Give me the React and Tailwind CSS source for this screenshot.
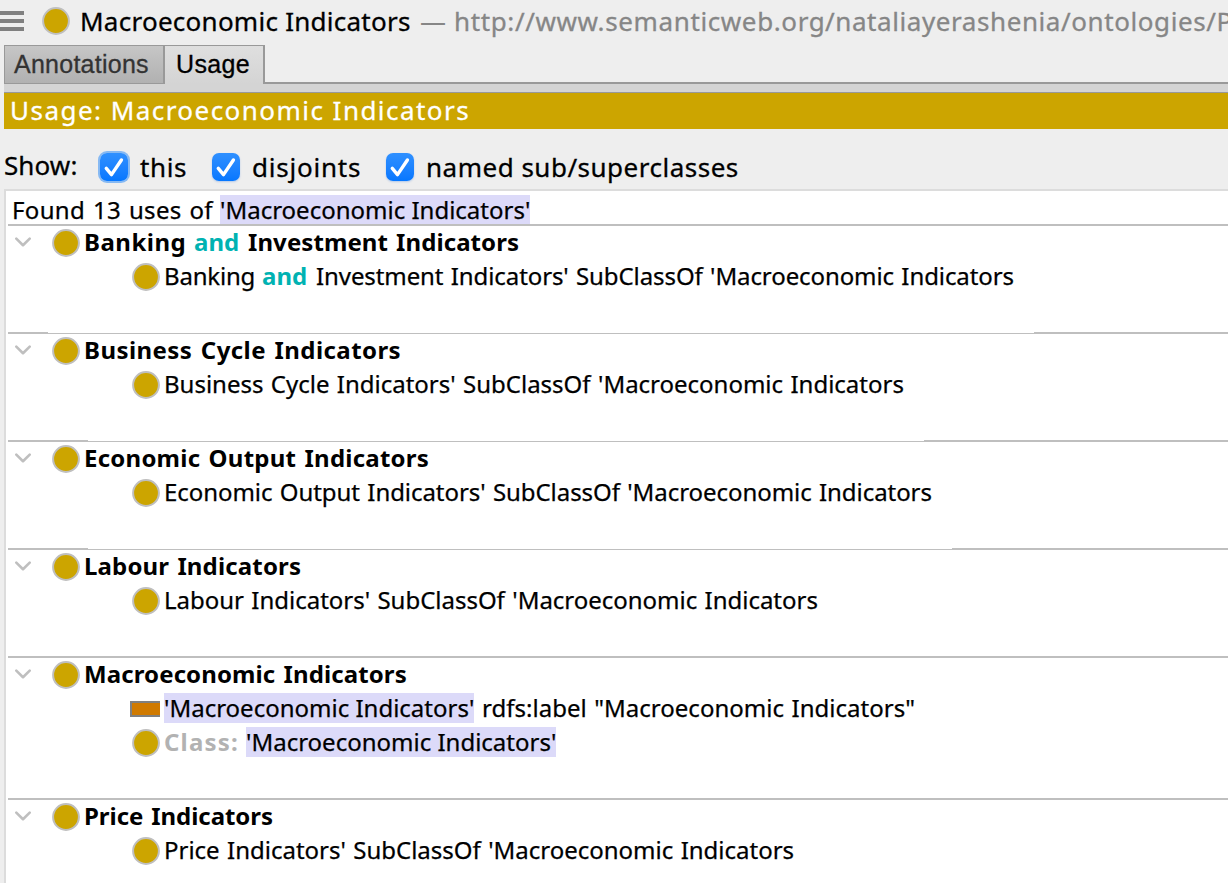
import React from "react";

function Dot() {
  return (
    <svg className="block h-7 w-7 shrink-0" viewBox="0 0 28 28">
      <circle cx="14" cy="14" r="12.9" fill="#cca500" stroke="#bfbfbf" strokeWidth="2" />
    </svg>
  );
}

function Chevron() {
  return (
    <svg className="ml-[7px] h-[34px] w-4 shrink-0" viewBox="0 0 16 34">
      <path d="M1.3 12.6 L8 19.2 L14.7 12.6" fill="none" stroke="#bfbfbf" strokeWidth="2.6" strokeLinecap="round" strokeLinejoin="round" />
    </svg>
  );
}

function Check({ focus }) {
  return (
    <span
      className={
        focus
          ? "flex h-7 w-7 shrink-0 rounded-[7px] bg-gradient-to-b from-[#2f90ff] to-[#0577ff] shadow-[0_0_0_2px_#86b9f3]"
          : "flex h-7 w-7 shrink-0 rounded-[7px] bg-gradient-to-b from-[#2f90ff] to-[#0577ff] shadow-[0_1px_2px_rgba(0,90,220,0.25)]"
      }
    >
      <svg className="h-7 w-7" viewBox="0 0 28 28">
        <path d="M6.3 15.4 L11.5 21.6 L21.4 7" fill="none" stroke="#fff" strokeWidth="3.4" strokeLinecap="round" strokeLinejoin="round" />
      </svg>
    </span>
  );
}

function Line({ gap }) {
  return (
    <div className="ml-0.5 flex h-0.5 items-end bg-white">
      {gap ? (
        <>
          <div className={gap.left + " h-0.5 shrink-0 bg-[#bfbfbf]"} />
          <div className={gap.mid + " h-px shrink-0 bg-[#bfbfbf]"} />
          <div className="h-0.5 flex-1 bg-[#bfbfbf]" />
        </>
      ) : (
        <div className="h-0.5 flex-1 bg-[#bfbfbf]" />
      )}
    </div>
  );
}

function T({ className = "", children }) {
  return <span className={"mt-px block h-[30px] shrink-0 whitespace-pre leading-[30px] " + className}>{children}</span>;
}

function Group({ title, children, tall }) {
  return (
    <section className={tall ? "h-[140px] text-[24px]" : "h-[106px] text-[24px]"}>
      <div className="ml-0.5 flex h-[34px]">
        <Chevron />
        <div className="ml-[21px] mr-[4px] flex items-center">
          <Dot />
        </div>
        <div className="flex font-bold [word-spacing:1.8px]">{title}</div>
      </div>
      {children}
    </section>
  );
}

function Sub({ icon, children }) {
  return (
    <div className="flex h-[34px] pl-[126px] [-webkit-text-stroke:0.25px] [word-spacing:1.2px]">
      <div className="mr-[4px] flex w-7 items-center justify-end">{icon || <Dot />}</div>
      {children}
    </div>
  );
}

const annotationIcon = <div className="h-4 w-[30px] shrink-0 border-2 border-r-0 border-[#808080] bg-[#d07a00]" />;

export default function App() {
  return (
    <div className="flex h-[883px] w-[1228px] flex-col overflow-hidden bg-[#eeeeee] font-['Noto_Sans','Open_Sans',sans-serif] text-black">
      <header className="flex h-[45px] text-[26px] [-webkit-text-stroke:0.3px]">
        <div className="mt-[11px] flex h-5 w-6 shrink-0 flex-col justify-between">
          <div className="h-1 bg-[#808080]" />
          <div className="h-1 bg-[#808080]" />
          <div className="h-1 bg-[#808080]" />
        </div>
        <div className="ml-[18px] mt-[7px] h-7">
          <Dot />
        </div>
        <span className="ml-[10px] mt-[3px] block w-[340px] shrink-0 whitespace-pre leading-9 tracking-[0.26px]">Macroeconomic Indicators</span>
        <span className="mt-[3px] block w-[33px] shrink-0 leading-9 text-[#868686] [-webkit-text-stroke:0]">—</span>
        <span className="ml-px mt-[3px] block w-[371px] shrink-0 whitespace-pre leading-9 tracking-[0.62px] text-[#868686]">http://www.semanticweb.org</span>
        <span className="mt-[3px] block whitespace-pre leading-9 tracking-[0.58px] text-[#868686]">/nataliayerashenia/ontologies/P</span>
      </header>

      <nav className="flex h-[39px] shrink-0 pl-1 font-['Liberation_Sans',sans-serif] text-[25px] [-webkit-text-stroke:0.3px]">
        <div className="w-[159px] border border-r-0 border-[#999999] bg-gradient-to-b from-[#c6c6c6] to-[#b1b1b1] pl-[9px] leading-9 tracking-[0.25px] text-[#333333]">Annotations</div>
        <div className="w-[102px] border-l-2 border-r-2 border-t border-[#999999] bg-gradient-to-b from-[#dfdfdf] to-[#d4d4d4] pl-[11px] leading-9 tracking-[0.35px]">Usage</div>
        <div className="flex-1 border-b-2 border-[#999999]" />
      </nav>
      <div className="ml-1 h-[9px] shrink-0 border-b border-[#999999] bg-[#d4d4d4]" />
      <div className="ml-1 h-9 shrink-0 whitespace-pre bg-[#cca500] pl-1.5 text-[26px] leading-[34px] tracking-[1.46px] text-white [-webkit-text-stroke:0.3px]">Usage: Macroeconomic Indicators</div>

      <div className="flex h-[60px] shrink-0 items-start pl-1 pt-6 text-[26px] leading-7 [-webkit-text-stroke:0.3px]">
        <span className="-mt-0.5 block w-24 shrink-0 tracking-[0.1px]">Show:</span>
        <Check focus />
        <span className="ml-3 block w-[72px] shrink-0 tracking-[0.6px]">this</span>
        <Check />
        <span className="ml-3 block w-[134px] shrink-0 tracking-[0.78px]">disjoints</span>
        <Check />
        <span className="ml-3 block shrink-0 whitespace-pre tracking-[0.5px]">named sub/superclasses</span>
      </div>

      <main className="ml-1 min-h-0 flex-1 overflow-hidden border-l-2 border-t-2 border-[#dcdcdc] bg-white">
        <div className="flex h-[33px] pl-[5px] pt-[3px] text-[24px] [-webkit-text-stroke:0.25px]">
          <T className="w-[209px] pl-px tracking-[0.35px] [word-spacing:1.2px]">Found 13 uses of</T>
          <T className="w-[310px] bg-[#dcdaf9]">'Macroeconomic Indicators'</T>
        </div>
        <Line />
        <Group
          title={
            <>
              <T className="w-[110px] tracking-[0.5px]">Banking</T>
              <T className="w-[54px] text-[#00b2b2]">and</T>
              <T className="tracking-[0.08px]">Investment Indicators</T>
            </>
          }
        >
          <Sub>
            <T className="w-[98px] tracking-[-0.2px]">Banking</T>
            <T className="w-[54px] font-bold text-[#00b2b2] [-webkit-text-stroke:0]">and</T>
            <T className="tracking-[-0.09px]">Investment Indicators' SubClassOf 'Macroeconomic Indicators</T>
          </Sub>
        </Group>
        <Line gap={{ left: "w-[40px]", mid: "w-[986px]" }} />
        <Group title={<T className="tracking-[0.44px]">Business Cycle Indicators</T>}>
          <Sub>
            <T className="tracking-[-0.01px]">Business Cycle Indicators' SubClassOf 'Macroeconomic Indicators</T>
          </Sub>
        </Group>
        <Line gap={{ left: "w-[80px]", mid: "w-[836px]" }} />
        <Group title={<T className="tracking-[0.24px]">Economic Output Indicators</T>}>
          <Sub>
            <T className="tracking-[-0.06px]">Economic Output Indicators' SubClassOf 'Macroeconomic Indicators</T>
          </Sub>
        </Group>
        <Line gap={{ left: "w-[80px]", mid: "w-[864px]" }} />
        <Group title={<T className="tracking-[0.15px]">Labour Indicators</T>}>
          <Sub>
            <T className="tracking-[-0.02px]">Labour Indicators' SubClassOf 'Macroeconomic Indicators</T>
          </Sub>
        </Group>
        <Line />
        <Group tall title={<T className="tracking-[0.11px]">Macroeconomic Indicators</T>}>
          <Sub icon={annotationIcon}>
            <T className="w-[310px] bg-[#dcdaf9] [word-spacing:0]">'Macroeconomic Indicators'</T>
            <T className="ml-2 tracking-[0.02px]">rdfs:label "Macroeconomic Indicators"</T>
          </Sub>
          <Sub>
            <T className="w-[82px] font-bold tracking-[1.2px] text-[#b2b2b2] [-webkit-text-stroke:0]">Class:</T>
            <T className="w-[310px] bg-[#dcdaf9] [word-spacing:0]">'Macroeconomic Indicators'</T>
          </Sub>
        </Group>
        <Line />
        <Group title={<T className="tracking-[-0.05px]">Price Indicators</T>}>
          <Sub>
            <T className="tracking-[-0.01px]">Price Indicators' SubClassOf 'Macroeconomic Indicators</T>
          </Sub>
        </Group>
      </main>
    </div>
  );
}
